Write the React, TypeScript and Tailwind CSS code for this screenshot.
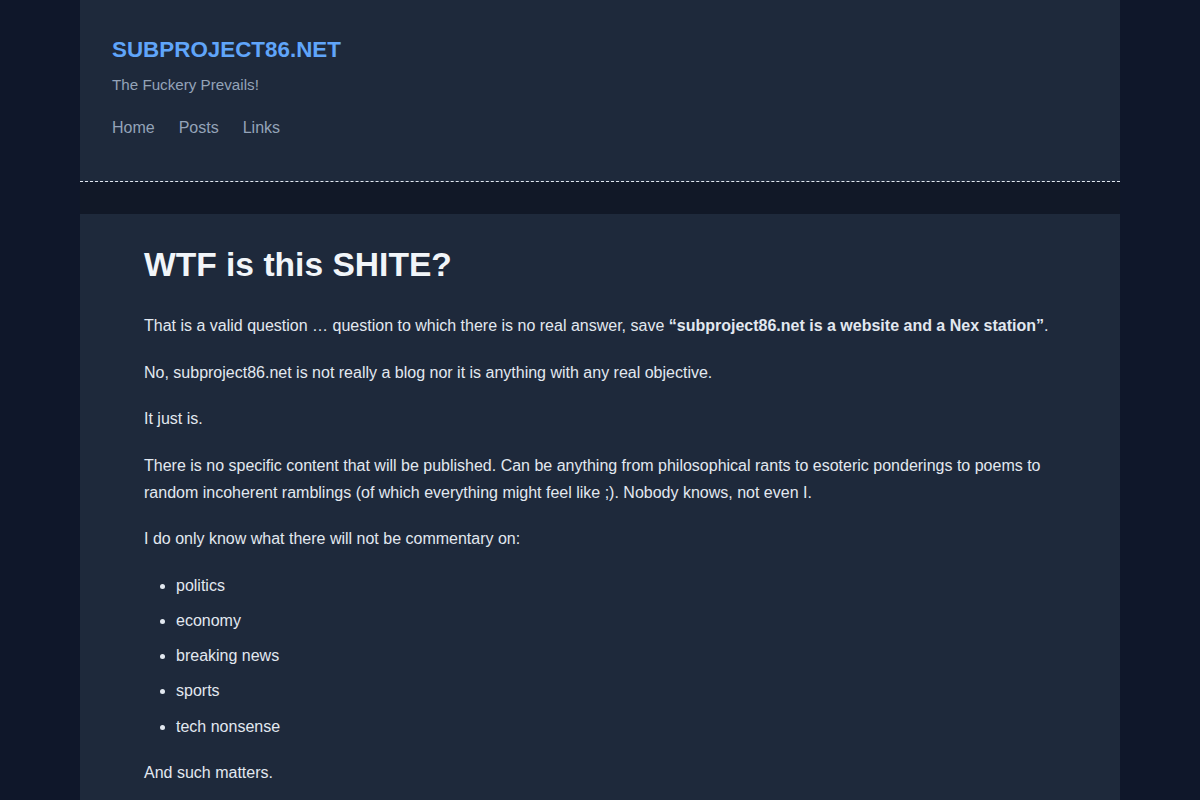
const items = ["politics", "economy", "breaking news", "sports", "tech nonsense"];

const navLinks = ["Home", "Posts", "Links"];

export default function App() {
  return (
    <div
      className="min-h-screen bg-[#0f172a] text-[#e2e8f0]"
      style={{ fontFamily: '"Liberation Sans", Arial, sans-serif' }}
    >
      <div className="mx-auto w-[1040px] bg-[#111827]">
        {/* header */}
        <header className="bg-[#1e293b] px-8 pt-[36px] pb-[41px] border-b border-dashed border-[#e2e8f0]">
          <a className="block text-[22.4px] leading-[28px] font-bold text-[#60a5fa]">
            SUBPROJECT86.NET
          </a>
          <p className="mt-[10px] text-[15.2px] leading-[22px] text-[#94a3b8]">
            The Fuckery Prevails!
          </p>
          <nav className="mt-[20px] flex gap-[24px] text-[16px] leading-[24px] text-[#94a3b8]">
            {navLinks.map((l) => (
              <a key={l}>{l}</a>
            ))}
          </nav>
        </header>

        <div className="h-[32px]" />

        {/* post */}
        <main className="bg-[#1e293b] px-16 pt-[31px] pb-16 text-[16px] leading-[27.2px]">
          <h1 className="text-[33.6px] leading-[40px] font-bold text-[#f1f5f9]">
            WTF is this SHITE?
          </h1>
          <p className="mt-[27px]">
            That is a valid question … question to which there is no real answer, save{" "}
            <strong className="font-bold">“subproject86.net is a website and a Nex station”</strong>.
          </p>
          <p className="mt-[19.3px]">
            No, subproject86.net is not really a blog nor it is anything with any real objective.
          </p>
          <p className="mt-[19.3px]">It just is.</p>
          <p className="mt-[19.3px]">
            There is no specific content that will be published. Can be anything from philosophical
            rants to esoteric ponderings to poems to random incoherent ramblings (of which everything
            might feel like ;). Nobody knows, not even I.
          </p>
          <p className="mt-[19.3px]">I do only know what there will not be commentary on:</p>
          <ul className="mt-[19.3px] list-disc pl-8">
            {items.map((i, idx) => (
              <li key={i} className={idx > 0 ? "mt-2" : ""}>
                {i}
              </li>
            ))}
          </ul>
          <p className="mt-[19.3px]">And such matters.</p>
        </main>
      </div>
    </div>
  );
}
